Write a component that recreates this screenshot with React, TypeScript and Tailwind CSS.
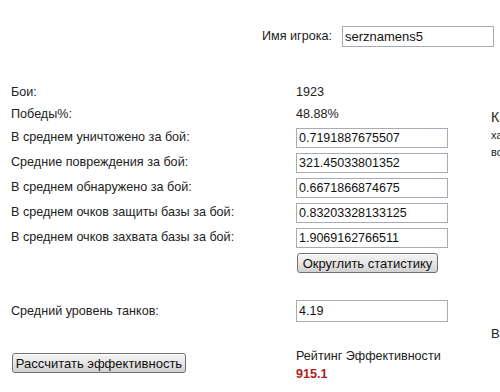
import React from "react";

const stats = [
  { label: "В среднем уничтожено за бой:", value: "0.7191887675507" },
  { label: "Средние повреждения за бой:", value: "321.45033801352" },
  { label: "В среднем обнаружено за бой:", value: "0.6671866874675" },
  { label: "В среднем очков защиты базы за бой:", value: "0.83203328133125" },
  { label: "В среднем очков захвата базы за бой:", value: "1.9069162766511" },
];

const inputCls =
  "h-[20px] w-[152px] border border-[#a5acb5] bg-white px-[2px] text-[12.5px] leading-none text-[#111] outline-none";

const btnCls =
  "h-[20px] whitespace-nowrap rounded-[3px] border border-[#707070] bg-gradient-to-b from-[#f4f4f4] via-[#e6e6e6] to-[#d2d2d2] px-0 text-center text-[13px] leading-none text-[#111] shadow-[inset_0_1px_0_#ffffff]";

export default function App() {
  return (
    <div
      className="relative h-[392px] w-[500px] overflow-hidden bg-white text-[12.6px] text-[#222]"
      style={{ fontFamily: '"Liberation Sans", Arial, sans-serif' }}
    >
      {/* player name */}
      <div className="mt-[26px] flex h-[21px] items-center pl-[262px]">
        <span className="w-[80px]">Имя игрока:</span>
        <input className={`${inputCls} h-[21px] w-[151px] text-[13px]`} defaultValue="serznamens5" />
      </div>

      <div className="mt-[34px] flex">
        <div className="w-[480px] shrink-0 pl-[11px]">
          <div className="flex h-[22px] items-center">
            <span className="w-[285px]">Бои:</span>
            <span>1923</span>
          </div>
          <div className="flex h-[22px] items-center">
            <span className="w-[285px]">Победы%:</span>
            <span>48.88%</span>
          </div>
          {stats.map((s) => (
            <div key={s.label} className="flex h-[25px] items-center">
              <span className="w-[285px]">{s.label}</span>
              <input className={inputCls} defaultValue={s.value} />
            </div>
          ))}
          <div className="flex h-[26px] items-center pl-[286px]">
            <button className={`${btnCls} w-[141px]`}>Округлить статистику</button>
          </div>

          <div className="mt-[23px] flex h-[24px] items-center">
            <span className="w-[285px]">Средний уровень танков:</span>
            <input className={`${inputCls} h-[22px]`} defaultValue="4.19" />
          </div>

          <div className="mt-[25px] flex items-start">
            <div className="w-[285px] pt-[5px]">
              <button className={`${btnCls} ml-[1px] w-[174px]`}>Рассчитать эффективность</button>
            </div>
            <div className="-mt-[1px] flex flex-col leading-[18px]">
              <span>Рейтинг Эффективности</span>
              <span className="font-bold text-[#b01e1e]">915.1</span>
            </div>
          </div>
        </div>

        <div className="flex flex-col whitespace-nowrap pl-[11px] text-[#222]">
          <span className="mt-[27px] text-[14px] leading-[18px]">Карта</span>
          <span className="text-[11px] leading-[18px]">характеристики</span>
          <span className="text-[11px] leading-[16px]">вс</span>
          <span className="mt-[166px] text-[13px] leading-[16px]">В</span>
        </div>
      </div>
    </div>
  );
}
